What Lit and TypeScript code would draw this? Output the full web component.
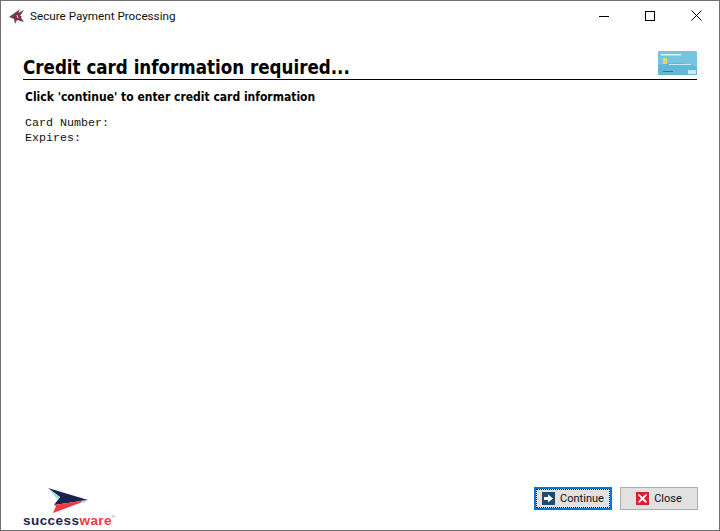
import { LitElement, html, css } from "lit";
import { customElement } from "lit/decorators.js";

@customElement("app-root")
export class AppRoot extends LitElement {
  static styles = css`
    :host { display: block; width: 720px; height: 531px; }
    .win { box-sizing: border-box; width: 720px; height: 531px; border: 1px solid #6f6f6f; background: #fff; display: flex; flex-direction: column; color: #000; overflow: hidden; }
    .title { height: 29px; flex: none; display: flex; align-items: center; }
    .appicon { width: 16px; height: 16px; margin-left: 8px; flex: none; }
    .ttext { font: 11.7px Roboto, sans-serif; margin-left: 5px; flex: 1; color: #111; white-space: nowrap; }
    .ctl { width: 46px; height: 29px; display: flex; align-items: center; justify-content: center; flex: none; }
    .ctls { display: flex; }
    .main { flex: 1; display: flex; flex-direction: column; padding: 21px 22px 0 22px; min-height: 0; }
    .head { display: flex; justify-content: space-between; align-items: flex-end; border-bottom: 1px solid #000; height: 28px; }
    h1 { margin: 0; font: bold 18.6px/33px "DejaVu Sans Condensed", "DejaVu Sans", sans-serif; font-stretch: condensed; white-space: nowrap; height: 28px; }
    .card { width: 39px; height: 24px; margin-bottom: 4px; flex: none; display: block; }
    .sub { margin: 9px 0 0 2px; font: bold 12px/17px "DejaVu Sans Condensed", "DejaVu Sans", sans-serif; font-stretch: condensed; white-space: nowrap; }
    .mono { margin: 10px 0 0 2px; font: 11.67px/15px "Liberation Mono", monospace; color: #111; white-space: pre; }
    .spacer { flex: 1; }
    .foot { display: flex; justify-content: space-between; align-items: flex-end; padding-bottom: 3px; }
    .logo { display: flex; flex-direction: column; align-items: flex-start; }
    .logo svg { display: block; margin-left: 25px; }
    .word { font: bold 13.5px/13px "Liberation Sans", sans-serif; letter-spacing: 0.45px; color: #1b2456; display: flex; }
    .word b { color: #ef3a46; font-weight: bold; }
    .word i { font: 4px/6px "Liberation Sans", sans-serif; color: #555; }
    .btns { display: flex; gap: 8px; padding-bottom: 17px; margin-right: -1px; }
    button { box-sizing: border-box; width: 78px; height: 23px; padding: 0; background: #e1e1e1; border: 1px solid #adadad; font: 11px Roboto, sans-serif; color: #111; display: flex; align-items: center; justify-content: center; gap: 5px; position: relative; }
    button.primary { border: 2px solid #0078d7; }
    button.primary::after { content: ""; position: absolute; inset: 0; border: 1px dotted #111; }
    button svg { flex: none; display: block; }
  `;

  render() {
    return html`<div class="win">
      <div class="title">
        <svg class="appicon" viewBox="0 0 16 16">
          <path d="M0 9 L11 1 L9 5 L15 2 L11 8 L15 14 L8 12 L6 16 L5 11 Z" fill="#5a4a58"/>
          <path d="M5 9 L10 4 L10 8 L13 8 L9 12 L6 11 Z" fill="#9c1c34"/>
          <path d="M8 7 L9 10" stroke="#fff" stroke-width="1"/>
        </svg>
        <span class="ttext">Secure Payment Processing</span>
        <div class="ctls">
          <div class="ctl"><svg width="10" height="10" viewBox="0 0 10 10"><path d="M0 5.5H10" stroke="#000" fill="none"/></svg></div>
          <div class="ctl"><svg width="10" height="10" viewBox="0 0 10 10"><rect x=".5" y=".5" width="9" height="9" stroke="#000" fill="none"/></svg></div>
          <div class="ctl"><svg width="11" height="11" viewBox="0 0 11 11"><path d="M.5 .5L10.5 10.5M10.5 .5L.5 10.5" stroke="#000" fill="none"/></svg></div>
        </div>
      </div>
      <div class="main">
        <div class="head">
          <h1>Credit card information required...</h1>
          <svg class="card" viewBox="0 0 39 24">
            <rect width="39" height="24" rx="1" fill="#76c5df"/>
            <path d="M0 14 Q20 8 39 16 V24 H0Z" fill="#62b7d6"/>
            <rect x="5" y="7" width="4" height="6" fill="#e3d75e"/>
            <rect x="3" y="3" width="20" height="1.5" fill="#dff3fa"/>
            <rect x="11" y="13" width="22" height="1" fill="#c9ecf6"/>
            <rect x="30" y="19" width="8" height="4" fill="#cfe8f2"/>
            <rect x="5" y="20" width="10" height="1" fill="#2c7d9c"/>
          </svg>
        </div>
        <div class="sub">Click 'continue' to enter credit card information</div>
        <div class="mono">Card Number:
Expires:</div>
        <div class="spacer"></div>
        <div class="foot">
          <div class="logo">
            <svg width="40" height="26" viewBox="0 0 40 26">
              <path d="M0 0 L40 12 L6 17 L12 9 Z" fill="#1a2350"/>
              <path d="M0 0 L12 9 L10 12 Z" fill="#a8dcd4"/>
              <path d="M6 17 L40 12 L5 25 L8 18Z" fill="#ef3a46"/>
              <path d="M40 12 L32 13 L36 15Z" fill="#a8dcd4"/>
            </svg>
            <div class="word">success<b>ware</b><i>®</i></div>
          </div>
          <div class="btns">
            <button class="primary">
              <svg width="13" height="13" viewBox="0 0 13 13"><rect width="13" height="13" fill="#1f4a6e"/><path d="M2 5H6V2.5L11 6.5L6 10.5V8H2Z" fill="#fff"/></svg>
              <span>Continue</span>
            </button>
            <button>
              <svg width="13" height="13" viewBox="0 0 13 13"><rect width="13" height="13" fill="#d8232f"/><path d="M3 2L6.5 5L10 2L11 3L8 6.5L11 10L10 11L6.5 8L3 11L2 10L5 6.5L2 3Z" fill="#fff"/></svg>
              <span>Close</span>
            </button>
          </div>
        </div>
      </div>
    </div>`;
  }
}
